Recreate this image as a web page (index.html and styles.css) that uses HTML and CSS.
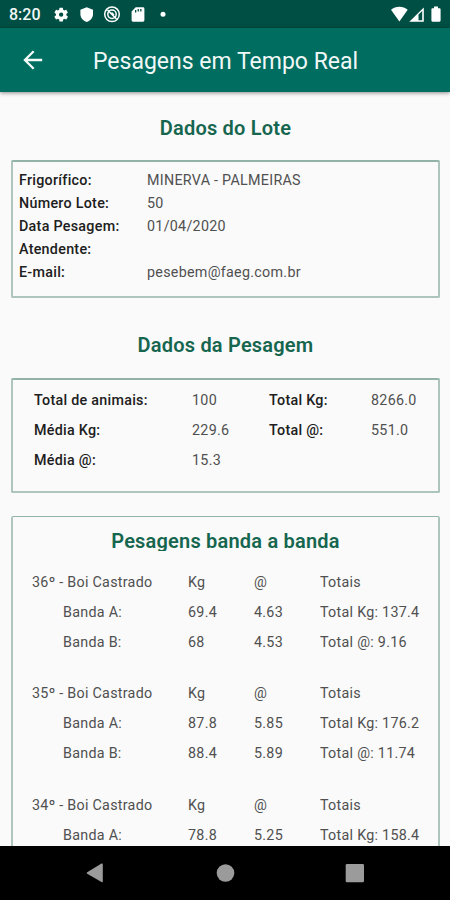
FILE: index.html
```html
<!DOCTYPE html>
<html lang="pt-BR">
<head>
<meta charset="utf-8">
<title>Pesagens em Tempo Real</title>
<link rel="stylesheet" href="styles.css">
</head>
<body>
<div class="statusbar">
  <span class="clock">8:20</span>
  <svg class="status-icons" width="120" height="28" viewBox="0 0 120 28" fill="#fff">
    <g transform="translate(4.5 6) scale(.72)"><path d="M19.14 12.94c.04-.3.06-.61.06-.94 0-.32-.02-.64-.07-.94l2.03-1.58a.49.49 0 0 0 .12-.61l-1.92-3.32a.49.49 0 0 0-.59-.22l-2.39.96a7 7 0 0 0-1.62-.94l-.36-2.54a.48.48 0 0 0-.48-.41h-3.84a.48.48 0 0 0-.47.41l-.36 2.54c-.59.24-1.13.57-1.62.94l-2.39-.96a.48.48 0 0 0-.59.22L2.74 8.87a.48.48 0 0 0 .12.61l2.03 1.58a6 6 0 0 0 0 1.88l-2.03 1.58a.49.49 0 0 0-.12.61l1.92 3.32c.12.22.37.29.59.22l2.39-.96c.5.38 1.03.7 1.62.94l.36 2.54c.05.24.24.41.48.41h3.84c.24 0 .44-.17.47-.41l.36-2.54a7 7 0 0 0 1.62-.94l2.39.96c.22.08.47 0 .59-.22l1.92-3.32a.48.48 0 0 0-.12-.61zM12 15a3 3 0 1 1 0-6 3 3 0 0 1 0 6z"/></g>
    <path d="M38.700 7.300l6.300 2.500v4.500c0 3.700-2.700 6.500-6.300 7.700-3.600-1.200-6.300-4-6.300-7.700V9.800z"/>
    <g fill="none" stroke="#fff"><circle cx="64" cy="14.300" r="7.300" stroke-width="1.500"/><circle cx="64" cy="14.300" r="4.200" stroke-width="1.500"/><path d="M59.500 10l9 9M63.500 12.500l2.500 2.500" stroke-width="1.500"/></g>
    <path fill-rule="evenodd" d="M87.700 7.300H95a1.400 1.400 0 0 1 1.400 1.400v11.600a1.400 1.400 0 0 1-1.400 1.400H85a1.400 1.400 0 0 1-1.400-1.400V11.400zM87 10v2.500h1.300V10zm2.600-1v2.500h1.300V9zm2.600 0v2.500h1.300V9z"/>
    <circle cx="115" cy="14.300" r="2.500"/>
  </svg>
  <svg class="signal-icons" width="60" height="28" viewBox="0 0 60 28" fill="#fff">
    <path d="M1 9.700C5.500 5.600 13.200 5.600 17.700 9.700L9.400 21.500z"/>
    <path fill-rule="evenodd" d="M19.300 21.700L33.800 7.500v14.200zM28.500 14.500v5.700h3.700V11z"/>
    <path d="M44 6.500h4v1.700h1.400c.7 0 1.200.5 1.200 1.200v11.200c0 .7-.5 1.200-1.200 1.200h-6.800c-.7 0-1.200-.5-1.200-1.200V9.400c0-.7.500-1.200 1.200-1.200H44z"/>
  </svg>
</div>
<header class="appbar">
  <svg class="back" width="20" height="20" viewBox="0 0 20 20" fill="none" stroke="#f4faf8" stroke-width="2.300"><path d="M19.200 10H2.200M10.700 1.200L1.900 10l8.800 8.800"/></svg>
  <h1>Pesagens em Tempo Real</h1>
</header>
<main>
  <h2 class="lote-title">Dados do Lote</h2>
  <dl class="card lote">
    <dt>Frigorífico:</dt><dd>MINERVA - PALMEIRAS</dd>
    <dt>Número Lote:</dt><dd>50</dd>
    <dt>Data Pesagem:</dt><dd>01/04/2020</dd>
    <dt>Atendente:</dt><dd></dd>
    <dt>E-mail:</dt><dd>pesebem@faeg.com.br</dd>
  </dl>
  <h2 class="pesagem-title">Dados da Pesagem</h2>
  <dl class="card pesagem">
    <dt>Total de animais:</dt><dd>100</dd><dt>Total Kg:</dt><dd>8266.0</dd>
    <dt>Média Kg:</dt><dd>229.6</dd><dt>Total @:</dt><dd>551.0</dd>
    <dt>Média @:</dt><dd>15.3</dd>
  </dl>
  <section class="card bandas">
    <h2 class="bandas-title">Pesagens banda a banda</h2>
    <div class="animal">
      <span>36º - Boi Castrado</span><span>Kg</span><span>@</span><span>Totais</span>
      <span class="banda">Banda A:</span><span>69.4</span><span>4.63</span><span>Total Kg: 137.4</span>
      <span class="banda">Banda B:</span><span>68</span><span>4.53</span><span>Total @: 9.16</span>
    </div>
    <div class="animal">
      <span>35º - Boi Castrado</span><span>Kg</span><span>@</span><span>Totais</span>
      <span class="banda">Banda A:</span><span>87.8</span><span>5.85</span><span>Total Kg: 176.2</span>
      <span class="banda">Banda B:</span><span>88.4</span><span>5.89</span><span>Total @: 11.74</span>
    </div>
    <div class="animal">
      <span>34º - Boi Castrado</span><span>Kg</span><span>@</span><span>Totais</span>
      <span class="banda">Banda A:</span><span>78.8</span><span>5.25</span><span>Total Kg: 158.4</span>
    </div>
  </section>
</main>
<nav class="navbar">
  <svg width="450" height="54" viewBox="0 0 450 54" fill="#9b9b9b">
    <path d="M87.200 26.200L101.500 17.600q1.300-.6 1.300.8v16.800q0 1.400-1.300.8L87.200 27.800q-1.200-.8 0-1.600z"/>
    <circle cx="225.500" cy="27" r="8.800"/>
    <rect x="345.700" y="18" width="18.300" height="18.300" rx="1.300"/>
  </svg>
</nav>
</body>
</html>
```
FILE: styles.css
```css
* { box-sizing: border-box; }
body {
  margin: 0;
  height: 900px;
  display: flex;
  flex-direction: column;
  overflow: hidden;
  background: #fafafa;
  color: #505050;
  font: 14.3px/23px Roboto, sans-serif;
  letter-spacing: .28px;
}
.statusbar {
  flex: 0 0 28px;
  height: 28px;
  display: flex;
  background: #004f44;
}
.clock {
  width: 48px;
  height: 28px;
  padding-left: 9px;
  color: #f1f7f5;
  font-size: 16px;
  font-weight: 500;
  letter-spacing: 0;
  line-height: 30px;
}
.signal-icons { margin-left: auto; }
.appbar {
  flex: 0 0 64px;
  display: flex;
  align-items: center;
  padding-left: 23px;
  background: #006d61;
  box-shadow: 0 1px 4px rgba(0, 0, 0, .45);
  z-index: 1;
}
.appbar h1 {
  margin: 0 0 0 50px;
  padding-top: 3px;
  color: #f1f8f6;
  font-size: 23px;
  font-weight: 400;
  letter-spacing: 0;
  line-height: 28px;
  white-space: nowrap;
}
main {
  flex: 1;
  min-height: 0;
  overflow: hidden;
  padding: 0 10px 0 11px;
}
h2 {
  margin: 0;
  color: #16664f;
  font-size: 20px;
  font-weight: 600;
  letter-spacing: .2px;
  text-align: center;
}
.lote-title { padding: 25px 0 20px; line-height: 23px; }
.pesagem-title { padding: 36px 0 21px; line-height: 23px; }
.card {
  margin: 0;
  border: 2px solid #adc5bd;
  border-top-color: #92b4a8;
  border-radius: 2px;
}
dt { color: #202020; font-weight: 500; }
dd { margin: 0; }
.lote {
  display: grid;
  grid-template-columns: 128px 1fr;
  grid-auto-rows: 23px;
  height: 138px;
  padding: 7px 0 0 6px;
}
.pesagem {
  display: grid;
  grid-template-columns: 158px 77px 102px 1fr;
  grid-auto-rows: 30px;
  height: 115px;
  margin-bottom: 23px;
  padding: 5px 0 0 21px;
  line-height: 30px;
}
.bandas { height: 500px; border-top-width: 1px; }
.bandas-title {
  height: 34px;
  padding-top: 12px;
  line-height: 25px;
  overflow: hidden;
}
.animal {
  display: grid;
  grid-template-columns: 156px 66px 66px 1fr;
  grid-auto-rows: 29.800px;
  margin: 17px 0 22px;
  padding-left: 19px;
  line-height: 29.800px;
}
.animal + .animal { margin-top: 0; }
.banda { padding-left: 31px; }
.navbar { flex: 0 0 54px; background: #000; }
.navbar svg { display: block; }
```
